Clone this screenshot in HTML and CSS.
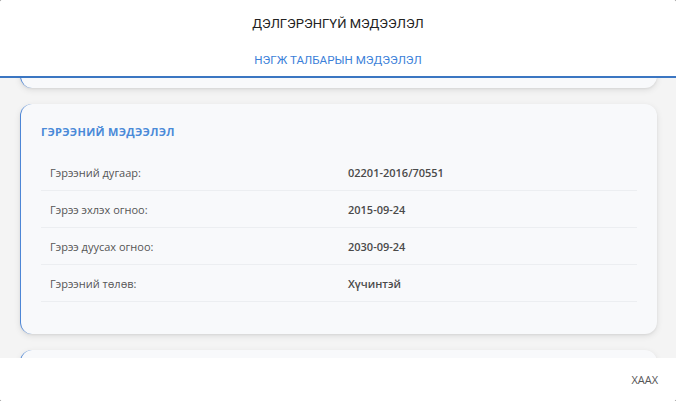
FILE: index.html
```html
<!DOCTYPE html>
<html lang="mn">
<head>
<meta charset="utf-8">
<title>Дэлгэрэнгүй мэдээлэл</title>
<link rel="stylesheet" href="styles.css">
</head>
<body>
<div class="dialog">
  <header class="dialog-header">
    <div class="dialog-title">ДЭЛГЭРЭНГҮЙ МЭДЭЭЛЭЛ</div>
    <nav class="tabs">
      <div class="tab active">НЭГЖ ТАЛБАРЫН МЭДЭЭЛЭЛ</div>
    </nav>
  </header>
  <main class="dialog-body" id="body">
    <section class="card card-collapsed" aria-hidden="true"></section>
    <section class="card" id="contract">
      <h3 class="card-title">ГЭРЭЭНИЙ МЭДЭЭЛЭЛ</h3>
      <div class="rows">
        <div class="row"><span class="label">Гэрээний дугаар:</span><span class="value">02201-2016/70551</span></div>
        <div class="row"><span class="label">Гэрээ эхлэх огноо:</span><span class="value">2015-09-24</span></div>
        <div class="row"><span class="label">Гэрээ дуусах огноо:</span><span class="value">2030-09-24</span></div>
        <div class="row"><span class="label">Гэрээний төлөв:</span><span class="value">Хүчинтэй</span></div>
      </div>
    </section>
    <section class="card card-collapsed" aria-hidden="true"></section>
  </main>
  <footer class="dialog-footer">
    <button class="btn-text" type="button">ХААХ</button>
  </footer>
</div>
<script src="script.js"></script>
</body>
</html>
```
FILE: styles.css
```css
* { box-sizing: border-box; }
html, body { margin: 0; padding: 0; height: 100%; }
body {
  background: #555;
  font-family: "Open Sans", "Noto Sans", sans-serif;
  overflow: hidden;
}
.dialog {
  height: 100vh;
  display: flex;
  flex-direction: column;
  background: #f4f4f4;
  border-radius: 2px;
  overflow: hidden;
}
.dialog-header {
  background: #fff;
  display: flex;
  flex-direction: column;
  border-bottom: 2px solid #3b76c2;
  flex: none;
}
.dialog-title {
  height: 46px;
  display: flex;
  align-items: center;
  justify-content: center;
  font-family: Roboto, "Noto Sans", sans-serif;
  font-size: 13px;
  color: #222;
  padding-top: 1px;
}
.tabs {
  height: 30px;
  display: flex;
  justify-content: center;
}
.tab {
  display: flex;
  align-items: center;
  font-family: Roboto, "Noto Sans", sans-serif;
  font-size: 11.6px;
  font-weight: 400;
  color: #3b7fd9;
  padding-bottom: 2px;
}
.dialog-body {
  flex: 1;
  overflow: hidden;
  padding: 16px 19px 16px 20px;
  display: flex;
  flex-direction: column;
  gap: 16px;
  position: relative;
}
.card {
  flex: none;
  background: #f8f9fb;
  border-left: 1px solid #4d86d6;
  border-radius: 12px;
  box-shadow: 0 2px 6px rgba(0,0,0,0.10), 0 1px 2px rgba(0,0,0,0.05);
  padding: 20px 20px 32px 20px;
}
.card-collapsed { min-height: 120px; }
.card-title {
  margin: 0 0 14px 0;
  font-size: 11px;
  font-weight: 700;
  color: #4a8ad8;
  letter-spacing: 0.3px;
  line-height: 16px;
}
.rows { display: flex; flex-direction: column; }
.row {
  display: grid;
  grid-template-columns: 1fr 1fr;
  height: 37px;
  align-items: center;
  border-bottom: 1px solid #eceef1;
}
.label, .value {
  padding: 0 9px;
  font-size: 11px;
}
.label { color: #555; }
.value { color: #4a4a4a; font-weight: 600; }
.dialog-footer {
  flex: none;
  height: 43px;
  background: #fff;
  display: flex;
  justify-content: flex-end;
  align-items: center;
  padding: 0 12px;
}
.btn-text {
  background: none;
  border: none;
  font-family: "Open Sans", "Noto Sans", sans-serif;
  font-size: 11px;
  font-weight: 400;
  color: #555;
  padding: 4px 6px;
  cursor: pointer;
}
```
FILE: script.js
```js
var body = document.getElementById('body');
var card = document.getElementById('contract');
body.scrollTop = card.offsetTop - 26;
```
